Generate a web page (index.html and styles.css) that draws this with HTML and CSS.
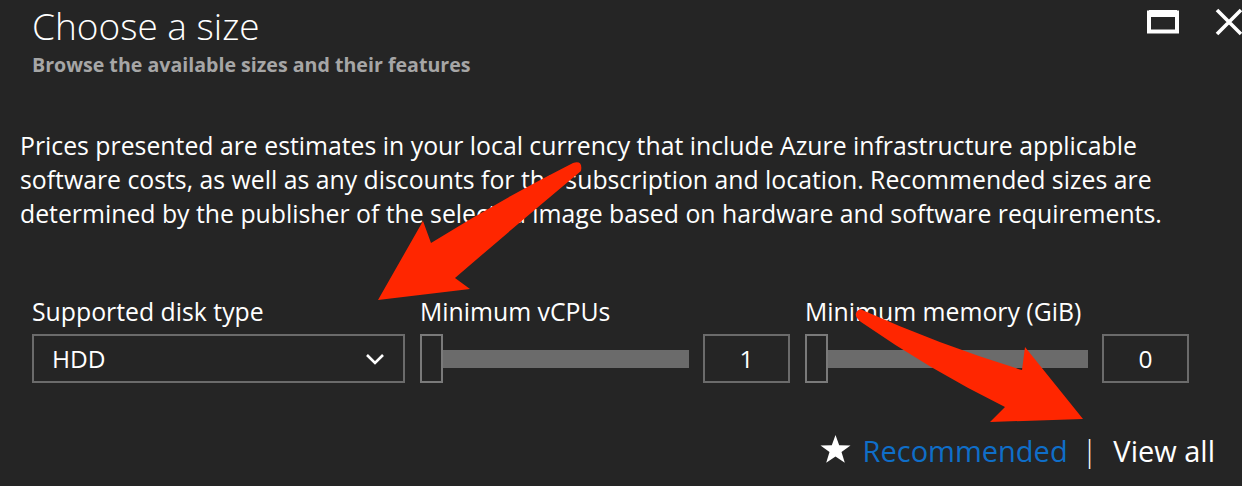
FILE: index.html
```html
<!DOCTYPE html>
<html lang="en">
<head>
<meta charset="utf-8">
<title>Choose a size</title>
<link rel="stylesheet" href="styles.css">
</head>
<body>
<div class="blade">
  <header class="head">
    <div class="titles">
      <h1 class="title">Choose a size</h1>
      <p class="subtitle">Browse the available sizes and their features</p>
    </div>
    <div class="win-actions">
      <svg class="ic-max" width="32" height="28" viewBox="0 0 32 28"><rect x="2" y="4.5" width="28" height="19" fill="none" stroke="#fff" stroke-width="4"/><rect x="2" y="2" width="28" height="7" fill="#fff"/></svg>
      <svg class="ic-close" width="28" height="28" viewBox="0 0 28 28"><path d="M2 2 L26 26 M26 2 L2 26" stroke="#fff" stroke-width="3.6" fill="none"/></svg>
    </div>
  </header>

  <p class="note">Prices presented are estimates in your local currency that include Azure infrastructure applicable<br>software costs, as well as any discounts for the subscription and location. Recommended sizes are<br>determined by the publisher of the selected image based on hardware and software requirements.</p>

  <div class="filters">
    <div class="field">
      <label class="lbl">Supported disk type</label>
      <div class="select">
        <span>HDD</span>
        <svg width="20" height="12" viewBox="0 0 20 12"><path d="M2 2 L10 10 L18 2" stroke="#fff" stroke-width="2.6" fill="none"/></svg>
      </div>
    </div>
    <div class="field">
      <label class="lbl">Minimum vCPUs</label>
      <div class="range">
        <div class="thumb"></div>
        <div class="track"></div>
        <div class="val">1</div>
      </div>
    </div>
    <div class="field">
      <label class="lbl">Minimum memory (GiB)</label>
      <div class="range">
        <div class="thumb"></div>
        <div class="track"></div>
        <div class="val">0</div>
      </div>
    </div>
  </div>

  <div class="foot">
    <svg class="star" width="31" height="28" viewBox="0 0 31 28"><path d="M15.5 0 L19.2 10.2 L30.5 10.4 L21.5 17 L24.8 27.8 L15.5 21.4 L6.2 27.8 L9.5 17 L0.5 10.4 L11.8 10.2 Z" fill="#fff"/></svg>
    <a class="rec">Recommended</a>
    <span class="sep">|</span>
    <a class="all">View all</a>
  </div>

  <svg class="arrows" width="1242" height="486" viewBox="0 0 1242 486">
    <path d="M378 300 L423 221 L431 243 Q500 200 573 163 Q583 160 581 171 Q520 222 455 278 L470 289 Z" fill="#ff2600"/>
    <path d="M1083 419 L990 422 L1005 407 Q930 370 861 322 Q851 314 860 309 Q940 345 1022 370 L1025 347 Z" fill="#ff2600"/>
  </svg>
</div>
</body>
</html>
```

FILE: styles.css
```css
* { box-sizing: border-box; }
html, body { margin: 0; padding: 0; }
body {
  background: #252525;
  color: #fff;
  font-family: "Open Sans", "Noto Sans", sans-serif;
  width: 1242px;
  height: 486px;
  overflow: hidden;
}
.blade { position: relative; width: 1242px; height: 486px; }

.head {
  display: flex;
  justify-content: space-between;
  align-items: flex-start;
  padding-left: 32px;
}
.title {
  margin: 0;
  font-weight: 300;
  font-size: 37px;
  line-height: 52px;
  color: #fff;
}
.subtitle {
  margin: 0;
  font-weight: 700;
  font-size: 19.6px;
  line-height: 26px;
  color: #a6a6a6;
}
.win-actions {
  display: flex;
  gap: 36px;
  padding-top: 8px;
  margin-right: -1px;
}

.note {
  margin: 50px 0 0 20px;
  font-size: 24.8px;
  line-height: 34px;
  color: #fff;
  font-weight: 500;
}

.filters {
  display: grid;
  grid-template-columns: 373px 370px 384px;
  column-gap: 15px;
  padding-left: 32px;
  margin-top: 64px;
}
.lbl {
  display: block;
  font-size: 24.8px;
  line-height: 34px;
  margin-bottom: 6px;
  font-weight: 500;
}
.select {
  height: 49px;
  border: 2px solid #6b6b6b;
  display: flex;
  align-items: center;
  justify-content: space-between;
  padding: 0 18px 0 18px;
  font-size: 24.5px;
  font-weight: 500;
}
.range {
  display: flex;
  align-items: center;
  height: 49px;
}
.thumb {
  width: 23px;
  height: 49px;
  border: 2px solid #7a7a7a;
  background: #252525;
}
.track {
  flex: 1;
  height: 18px;
  background: #6b6b6b;
}
.val {
  width: 87px;
  height: 49px;
  margin-left: 14px;
  border: 2px solid #6b6b6b;
  display: flex;
  align-items: center;
  justify-content: center;
  font-size: 24.5px;
  font-weight: 500;
}

.foot {
  display: flex;
  justify-content: flex-end;
  align-items: center;
  padding-right: 27px;
  margin-top: 48px;
  font-size: 29px;
  line-height: 40px;
}
.star { margin-right: 12px; margin-top: -4px; }
.rec { color: #0f6ec8; }
.sep { margin: 0 16px 0 14px; font-weight: 300; }
.all { color: #fff; font-weight: 500; }

.arrows { position: absolute; left: 0; top: 0; pointer-events: none; }
```
